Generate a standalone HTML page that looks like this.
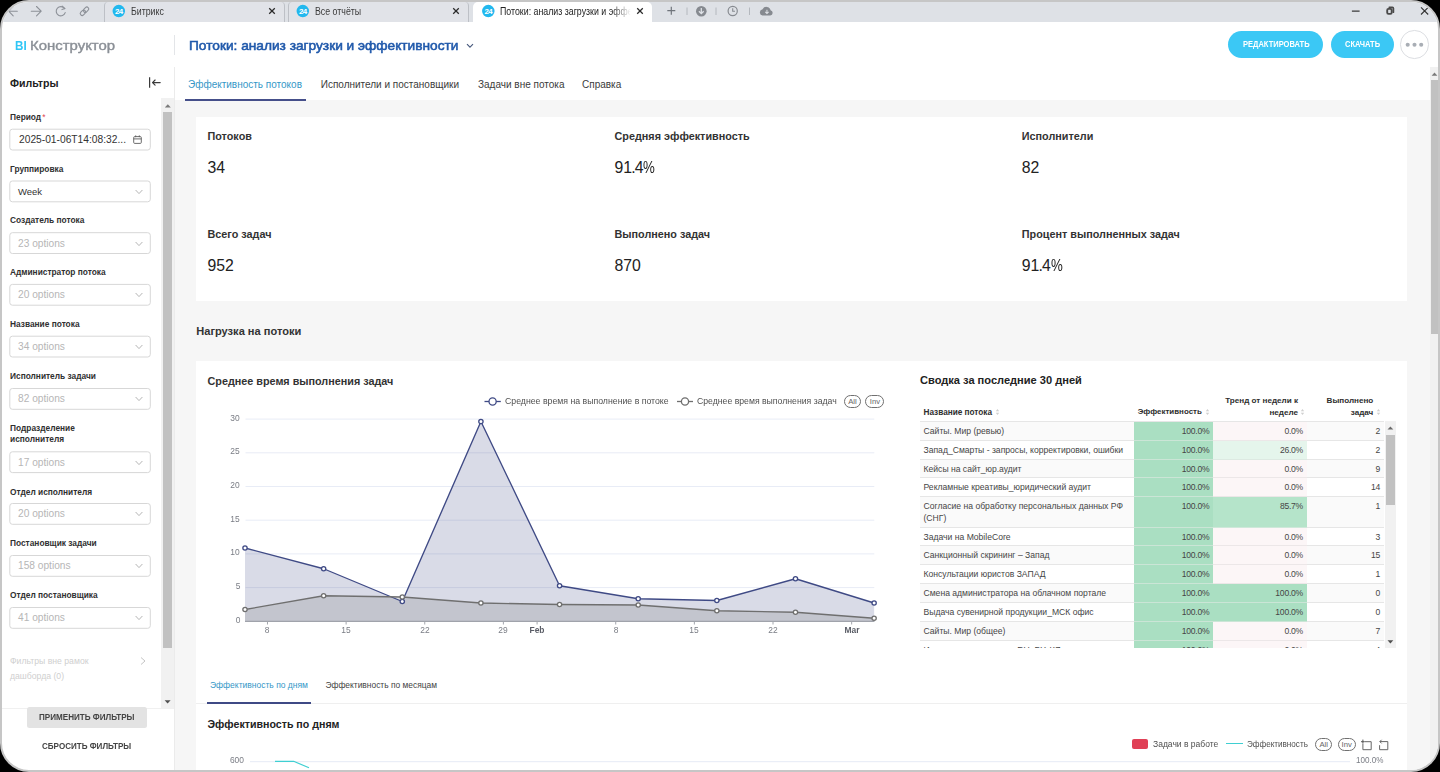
<!DOCTYPE html>
<html><head><meta charset="utf-8"><title>BI</title>
<style>
html,body{margin:0;padding:0;background:#000;}
body{width:1440px;height:772px;overflow:hidden;position:relative;font-family:"Liberation Sans", sans-serif;}
#win{position:absolute;left:0;top:0;width:1440px;height:772px;box-sizing:border-box;border:2px solid #c6c6c6;border-radius:29px;overflow:hidden;background:#fff;}
#in{position:absolute;left:-2px;top:-2px;width:1440px;height:772px;}
.t{position:absolute;white-space:nowrap;font-family:"Liberation Sans", sans-serif;}
.b{position:absolute;box-sizing:border-box;}
</style></head><body>
<div id="win"><div id="in">
<div class="b" style="left:0px;top:0px;width:1440px;height:22px;background:#dee1e6;"></div>
<svg class="b" style="left:4px;top:4px;" width="100" height="14" viewBox="0 0 100 14">
<g fill="none" stroke="#8d9198" stroke-width="1.1" stroke-linecap="round" stroke-linejoin="round">
<path d="M4.8 7.2 H13.3 M4.6 7.2 L9.2 2.6 M4.6 7.2 L9.2 11.8"/>
<path d="M27.3 7.2 H37 M37.2 7.2 L32.5 2.5 M37.2 7.2 L32.5 11.9"/>
<path d="M60.6 4.6 A4.6 4.6 0 1 0 61.2 8.6"/>
<path d="M58.2 2.2 L61 4.6 L58 5.6" />
<g transform="translate(80.5 7.2) rotate(-45)"><rect x="-5.2" y="-1.9" width="6" height="3.8" rx="1.9"/><rect x="-0.8" y="-1.9" width="6" height="3.8" rx="1.9"/></g>
</g></svg>
<div class="b" style="left:103.5px;top:2px;width:181.0px;height:20px;background:#e1e3e8;border-left:1.3px solid #bdc0c6;border-right:1.3px solid #bdc0c6;border-radius:4px 4px 0 0;"></div>
<svg class="b" style="left:111px;top:3px;" width="16" height="16" viewBox="0 0 16 16"><circle cx="7.80" cy="8.1" r="6.25" fill="#22b8ee"/></svg>
<div class="t" style="left:110.8px;top:5px;width:16px;height:12px;line-height:13.6px;font-size:7.9px;font-weight:700;color:#fff;text-align:center;letter-spacing:-0.55px;">24</div>
<div class="t" style="left:130.7px;top:4.63px;font-size:10.3px;line-height:13px;color:#3b3b3b;font-weight:400;transform:scaleX(0.855);transform-origin:0 50%;">Битрикс</div>
<svg class="b" style="left:268.2px;top:7px;" width="8" height="8" viewBox="0 0 8 8"><path d="M1.2 1.2 L6.8 6.8 M6.8 1.2 L1.2 6.8" stroke="#2b2b2b" stroke-width="1.25" fill="none"/></svg>
<div class="b" style="left:287.5px;top:2px;width:181.0px;height:20px;background:#e1e3e8;border-left:1.3px solid #bdc0c6;border-right:1.3px solid #bdc0c6;border-radius:4px 4px 0 0;"></div>
<svg class="b" style="left:295px;top:3px;" width="16" height="16" viewBox="0 0 16 16"><circle cx="7.80" cy="8.1" r="6.25" fill="#22b8ee"/></svg>
<div class="t" style="left:294.8px;top:5px;width:16px;height:12px;line-height:13.6px;font-size:7.9px;font-weight:700;color:#fff;text-align:center;letter-spacing:-0.55px;">24</div>
<div class="t" style="left:314.7px;top:4.63px;font-size:10.3px;line-height:13px;color:#3b3b3b;font-weight:400;transform:scaleX(0.855);transform-origin:0 50%;">Все отчёты</div>
<svg class="b" style="left:452.2px;top:7px;" width="8" height="8" viewBox="0 0 8 8"><path d="M1.2 1.2 L6.8 6.8 M6.8 1.2 L1.2 6.8" stroke="#2b2b2b" stroke-width="1.25" fill="none"/></svg>
<div class="b" style="left:473px;top:2px;width:179px;height:21px;background:#fff;border-radius:5px 5px 0 0;"></div>
<svg class="b" style="left:480px;top:3px;" width="16" height="16" viewBox="0 0 16 16"><circle cx="8.30" cy="8.1" r="6.25" fill="#22b8ee"/></svg>
<div class="t" style="left:480.3px;top:5px;width:16px;height:12px;line-height:13.6px;font-size:7.9px;font-weight:700;color:#fff;text-align:center;letter-spacing:-0.55px;">24</div>
<div class="t" style="left:499.5px;top:4.63px;font-size:10.3px;line-height:13px;color:#222;font-weight:400;width:153px;overflow:hidden;-webkit-mask-image:linear-gradient(90deg,#000 86%,transparent 100%);mask-image:linear-gradient(90deg,#000 86%,transparent 100%);transform:scaleX(0.855);transform-origin:0 50%;">Потоки: анализ загрузки и эффективности</div>
<svg class="b" style="left:635.7px;top:7px;" width="8" height="8" viewBox="0 0 8 8"><path d="M1.2 1.2 L6.8 6.8 M6.8 1.2 L1.2 6.8" stroke="#2b2b2b" stroke-width="1.25" fill="none"/></svg>
<svg class="b" style="left:665px;top:5px;" width="60" height="13" viewBox="0 0 60 13">
<path d="M6.3 1.7 V9.7 M2.3 5.7 H10.3" stroke="#70757c" stroke-width="1.2" fill="none"/>
<path d="M22 2.5 V10" stroke="#b4b8be" stroke-width="1"/>
<circle cx="36.3" cy="6.2" r="5.3" fill="#868a90"/>
<path d="M36.3 3 V8.3 M33.9 6.3 L36.3 8.7 L38.7 6.3" stroke="#dee1e6" stroke-width="1.3" fill="none"/>
<path d="M51 2.5 V10" stroke="#b4b8be" stroke-width="1"/></svg>
<svg class="b" style="left:725px;top:4px;" width="50" height="14" viewBox="0 0 50 14">
<circle cx="7.7" cy="7" r="4.6" fill="none" stroke="#868a90" stroke-width="1.2"/>
<path d="M7.7 4.3 V7.2 H10" stroke="#868a90" stroke-width="1.1" fill="none"/>
<path d="M24.5 3.5 V11" stroke="#b4b8be" stroke-width="1"/>
<g transform="translate(1.4 -0.3) scale(1.04)"><path d="M34.5 11.3 a3 3 0 0 1 .3 -5.9 a4.1 4.1 0 0 1 7.7 .8 a2.6 2.6 0 0 1 -.3 5.1 z" fill="#868a90"/>
<path d="M39 5.8 V9.3 M37.4 7.9 L39 9.5 L40.6 7.9" stroke="#dee1e6" stroke-width="1" fill="none"/></g></svg>
<svg class="b" style="left:1345px;top:2px;" width="90" height="18" viewBox="0 0 90 18">
<path d="M6.9 9.1 H14.6" stroke="#3a3a3a" stroke-width="1.4"/>
<rect x="42.2" y="6.9" width="4.5" height="5" rx="1.3" fill="none" stroke="#4a4a4a" stroke-width="1.9"/>
<path d="M44.3 5.3 H47.4 a1 1 0 0 1 1 1 V10.2" fill="none" stroke="#4a4a4a" stroke-width="1.7" stroke-linecap="round"/>
<path d="M76 5.3 L83.2 12.5 M83.2 5.3 L76 12.5" stroke="#333" stroke-width="1.1"/></svg>
<div class="b" style="left:175px;top:100px;width:1263px;height:672px;background:#f6f6f6;"></div>
<div class="t" style="left:14.6px;top:36.76px;font-size:13.4px;line-height:17px;color:#2fc6f6;font-weight:700;transform:scaleX(0.87);transform-origin:0 50%;">BI</div>
<div class="t" style="left:30.4px;top:36.76px;font-size:13.4px;line-height:17px;color:#8b9097;font-weight:400;transform:scaleX(1.115);transform-origin:0 50%;-webkit-text-stroke:0.4px #8b9097;">Конструктор</div>
<div class="b" style="left:174px;top:35px;width:1px;height:20px;background:#e3e5e8;"></div>
<div class="t" style="left:188.9px;top:36.79px;font-size:13.3px;line-height:17px;color:#2059ab;font-weight:400;transform:scaleX(1.03);transform-origin:0 50%;-webkit-text-stroke:0.55px #2059ab;">Потоки: анализ загрузки и эффективности</div>
<svg class="b" style="left:465px;top:42px;" width="10" height="8" viewBox="0 0 10 8"><path d="M2 2.2 L5 5.1 L8 2.2" fill="none" stroke="#46587c" stroke-width="1.15"/></svg>
<div class="b" style="left:1227.5px;top:31px;width:95px;height:27px;background:#3bc8f5;border-radius:13.5px;"></div>
<div class="t" style="left:1242.6px;top:38.47px;font-size:9.6px;line-height:12px;color:#fff;font-weight:700;transform:scaleX(0.785);transform-origin:0 50%;">РЕДАКТИРОВАТЬ</div>
<div class="b" style="left:1331px;top:31px;width:63px;height:27px;background:#3bc8f5;border-radius:13.5px;"></div>
<div class="t" style="left:1345.2px;top:38.47px;font-size:9.6px;line-height:12px;color:#fff;font-weight:700;transform:scaleX(0.78);transform-origin:0 50%;">СКАЧАТЬ</div>
<div class="b" style="left:1400.3px;top:30.3px;width:28.4px;height:28.4px;background:#fff;border:1.3px solid #dcdee2;border-radius:14.2px;"></div>
<svg class="b" style="left:1404px;top:41px;" width="22" height="8" viewBox="0 0 22 8"><circle cx="3.7" cy="3.7" r="2.05" fill="#a9aeb5"/><circle cx="10.5" cy="3.7" r="2.05" fill="#a9aeb5"/><circle cx="17.2" cy="3.7" r="2.05" fill="#a9aeb5"/></svg>
<div class="t" style="left:188px;top:78.13px;font-size:10px;line-height:13px;color:#3597c7;font-weight:400;">Эффективность потоков</div>
<div class="t" style="left:320.7px;top:78.13px;font-size:10px;line-height:13px;color:#3b3b3b;font-weight:400;">Исполнители и постановщики</div>
<div class="t" style="left:478px;top:78.13px;font-size:10px;line-height:13px;color:#3b3b3b;font-weight:400;">Задачи вне потока</div>
<div class="t" style="left:582px;top:78.13px;font-size:10px;line-height:13px;color:#3b3b3b;font-weight:400;">Справка</div>
<div class="b" style="left:185px;top:99px;width:120.5px;height:1.8px;background:#454f8a;"></div>
<div class="b" style="left:1429.5px;top:67px;width:9px;height:705px;background:#f1f1f1;"></div>
<svg class="b" style="left:1429.5px;top:70px;" width="9" height="8" viewBox="0 0 9 8"><path d="M1.6 5.8 L4.5 2.6 L7.4 5.8 Z" fill="#7a7a7a"/></svg>
<div class="b" style="left:1430.6px;top:80.2px;width:8px;height:253.5px;background:#c1c1c1;"></div>
<div class="b" style="left:174px;top:67px;width:1px;height:705px;background:#ebebeb;"></div>
<div class="t" style="left:10px;top:76.13px;font-size:10.58px;line-height:14px;color:#222;font-weight:700;">Фильтры</div>
<svg class="b" style="left:148px;top:76px;" width="14" height="13" viewBox="0 0 14 13"><path d="M1.6 1.3 V11.8" stroke="#3a3a3a" stroke-width="1.2"/><path d="M12.2 6.6 H4.5 M4.5 6.6 L7.1 4 M4.5 6.6 L7.1 9.2" stroke="#3a3a3a" stroke-width="1.15" fill="none" stroke-linecap="round" stroke-linejoin="round"/></svg>
<div class="b" style="left:161px;top:98px;width:13px;height:610px;background:#f1f1f1;"></div>
<svg class="b" style="left:162px;top:102px;" width="12" height="8" viewBox="0 0 12 8"><path d="M2.8 5.6 L5.8 2.3 L8.8 5.6 Z" fill="#7a7a7a"/></svg>
<div class="b" style="left:163px;top:112px;width:9.3px;height:536px;background:#c1c1c1;"></div>
<svg class="b" style="left:162px;top:698.3px;" width="12" height="8" viewBox="0 0 12 8"><path d="M2.6 2.2 L5.6 5.6 L8.6 2.2 Z" fill="#505050"/></svg>
<svg class="b" style="left:0;top:0" width="176" height="772" viewBox="0 0 176 772"><rect x="9.8" y="129.20" width="140.5" height="20.8" rx="2.6" fill="#fff" stroke="#d7d7d7" stroke-width="1"/><rect x="9.8" y="181.00" width="140.5" height="20.8" rx="2.6" fill="#fff" stroke="#d7d7d7" stroke-width="1"/><rect x="9.8" y="232.70" width="140.5" height="20.8" rx="2.6" fill="#fff" stroke="#d7d7d7" stroke-width="1"/><rect x="9.8" y="284.40" width="140.5" height="20.8" rx="2.6" fill="#fff" stroke="#d7d7d7" stroke-width="1"/><rect x="9.8" y="336.20" width="140.5" height="20.8" rx="2.6" fill="#fff" stroke="#d7d7d7" stroke-width="1"/><rect x="9.8" y="388.50" width="140.5" height="20.8" rx="2.6" fill="#fff" stroke="#d7d7d7" stroke-width="1"/><rect x="9.8" y="451.80" width="140.5" height="20.8" rx="2.6" fill="#fff" stroke="#d7d7d7" stroke-width="1"/><rect x="9.8" y="503.50" width="140.5" height="20.8" rx="2.6" fill="#fff" stroke="#d7d7d7" stroke-width="1"/><rect x="9.8" y="555.50" width="140.5" height="20.8" rx="2.6" fill="#fff" stroke="#d7d7d7" stroke-width="1"/><rect x="9.8" y="607.50" width="140.5" height="20.8" rx="2.6" fill="#fff" stroke="#d7d7d7" stroke-width="1"/></svg>
<div class="t" style="left:10px;top:111.61px;font-size:8.35px;line-height:11px;color:#303030;font-weight:700;">Период<span style="color:#e0444d;font-weight:400;margin-left:1px">*</span></div>
<div class="t" style="left:19px;top:133.25px;font-size:10.24px;line-height:13px;color:#333;font-weight:400;">2025-01-06T14:08:32...</div>
<svg class="b" style="left:131.5px;top:134.4px;" width="11" height="11" viewBox="0 0 11 11"><rect x="1.7" y="2.6" width="7.6" height="6.8" rx="1" fill="none" stroke="#5c5c5c" stroke-width="0.9"/><path d="M1.7 4.9 H9.3 M3.7 1.4 V3.2 M7.3 1.4 V3.2" stroke="#5c5c5c" stroke-width="0.9" fill="none"/></svg>
<div class="t" style="left:10px;top:164.11px;font-size:8.35px;line-height:11px;color:#303030;font-weight:700;">Группировка</div>
<div class="t" style="left:18px;top:185.71px;font-size:9.5px;line-height:12px;color:#333;font-weight:400;">Week</div>
<svg class="b" style="left:134px;top:187.9px;" width="10" height="8" viewBox="0 0 10 8"><path d="M1.6 2 L5 5.6 L8.4 2" fill="none" stroke="#b5b5b5" stroke-width="1"/></svg>
<div class="t" style="left:10px;top:215.01px;font-size:8.35px;line-height:11px;color:#303030;font-weight:700;">Создатель потока</div>
<div class="t" style="left:18px;top:236.67px;font-size:10.18px;line-height:13px;color:#b6b6b6;font-weight:400;">23 options</div>
<svg class="b" style="left:134px;top:239.6px;" width="10" height="8" viewBox="0 0 10 8"><path d="M1.6 2 L5 5.6 L8.4 2" fill="none" stroke="#b5b5b5" stroke-width="1"/></svg>
<div class="t" style="left:10px;top:267.21px;font-size:8.35px;line-height:11px;color:#303030;font-weight:700;">Администратор потока</div>
<div class="t" style="left:18px;top:288.37px;font-size:10.18px;line-height:13px;color:#b6b6b6;font-weight:400;">20 options</div>
<svg class="b" style="left:134px;top:291.29999999999995px;" width="10" height="8" viewBox="0 0 10 8"><path d="M1.6 2 L5 5.6 L8.4 2" fill="none" stroke="#b5b5b5" stroke-width="1"/></svg>
<div class="t" style="left:10px;top:318.51px;font-size:8.35px;line-height:11px;color:#303030;font-weight:700;">Название потока</div>
<div class="t" style="left:18px;top:340.17px;font-size:10.18px;line-height:13px;color:#b6b6b6;font-weight:400;">34 options</div>
<svg class="b" style="left:134px;top:343.09999999999997px;" width="10" height="8" viewBox="0 0 10 8"><path d="M1.6 2 L5 5.6 L8.4 2" fill="none" stroke="#b5b5b5" stroke-width="1"/></svg>
<div class="t" style="left:10px;top:371.41px;font-size:8.35px;line-height:11px;color:#303030;font-weight:700;">Исполнитель задачи</div>
<div class="t" style="left:18px;top:392.47px;font-size:10.18px;line-height:13px;color:#b6b6b6;font-weight:400;">82 options</div>
<svg class="b" style="left:134px;top:395.4px;" width="10" height="8" viewBox="0 0 10 8"><path d="M1.6 2 L5 5.6 L8.4 2" fill="none" stroke="#b5b5b5" stroke-width="1"/></svg>
<div class="t" style="left:10px;top:423.31px;font-size:8.35px;line-height:11px;color:#303030;font-weight:700;">Подразделение</div>
<div class="t" style="left:10px;top:434.11px;font-size:8.35px;line-height:11px;color:#303030;font-weight:700;">исполнителя</div>
<div class="t" style="left:18px;top:455.77px;font-size:10.18px;line-height:13px;color:#b6b6b6;font-weight:400;">17 options</div>
<svg class="b" style="left:134px;top:458.7px;" width="10" height="8" viewBox="0 0 10 8"><path d="M1.6 2 L5 5.6 L8.4 2" fill="none" stroke="#b5b5b5" stroke-width="1"/></svg>
<div class="t" style="left:10px;top:486.61px;font-size:8.35px;line-height:11px;color:#303030;font-weight:700;">Отдел исполнителя</div>
<div class="t" style="left:18px;top:507.47px;font-size:10.18px;line-height:13px;color:#b6b6b6;font-weight:400;">20 options</div>
<svg class="b" style="left:134px;top:510.4px;" width="10" height="8" viewBox="0 0 10 8"><path d="M1.6 2 L5 5.6 L8.4 2" fill="none" stroke="#b5b5b5" stroke-width="1"/></svg>
<div class="t" style="left:10px;top:538.41px;font-size:8.35px;line-height:11px;color:#303030;font-weight:700;">Постановщик задачи</div>
<div class="t" style="left:18px;top:559.47px;font-size:10.18px;line-height:13px;color:#b6b6b6;font-weight:400;">158 options</div>
<svg class="b" style="left:134px;top:562.4px;" width="10" height="8" viewBox="0 0 10 8"><path d="M1.6 2 L5 5.6 L8.4 2" fill="none" stroke="#b5b5b5" stroke-width="1"/></svg>
<div class="t" style="left:10px;top:590.11px;font-size:8.35px;line-height:11px;color:#303030;font-weight:700;">Отдел постановщика</div>
<div class="t" style="left:18px;top:611.47px;font-size:10.18px;line-height:13px;color:#b6b6b6;font-weight:400;">41 options</div>
<svg class="b" style="left:134px;top:614.4px;" width="10" height="8" viewBox="0 0 10 8"><path d="M1.6 2 L5 5.6 L8.4 2" fill="none" stroke="#b5b5b5" stroke-width="1"/></svg>
<div class="t" style="left:10px;top:655.5px;font-size:8.67px;line-height:11px;color:#cfcfcf;font-weight:400;">Фильтры вне рамок</div>
<div class="t" style="left:10px;top:670.5px;font-size:8.67px;line-height:11px;color:#cfcfcf;font-weight:400;">дашборда (0)</div>
<svg class="b" style="left:139px;top:656px;" width="8" height="10" viewBox="0 0 8 10"><path d="M2 1.5 L6 5 L2 8.5" fill="none" stroke="#c4c4c4" stroke-width="1"/></svg>
<div class="b" style="left:2px;top:707.5px;width:172px;height:1px;background:#f0f0f0;"></div>
<div class="b" style="left:27px;top:707px;width:120px;height:21px;background:#e3e3e3;border-radius:2.5px;"></div>
<div class="t" style="left:38.5px;top:712.09px;font-size:8.7px;line-height:11px;color:#444;font-weight:700;transform:scaleX(0.932);transform-origin:0 50%;">ПРИМЕНИТЬ ФИЛЬТРЫ</div>
<div class="t" style="left:41.8px;top:740.79px;font-size:8.7px;line-height:11px;color:#444;font-weight:700;transform:scaleX(0.928);transform-origin:0 50%;">СБРОСИТЬ ФИЛЬТРЫ</div>
<div class="b" style="left:196.3px;top:117.3px;width:1211px;height:183.5px;background:#fff;"></div>
<div class="t" style="left:207.5px;top:129.25px;font-size:10.82px;line-height:14px;color:#333;font-weight:700;">Потоков</div>
<div class="t" style="left:207.5px;top:157.43px;font-size:15.8px;line-height:21px;color:#222;font-weight:400;">34</div>
<div class="t" style="left:614.5px;top:129.25px;font-size:10.82px;line-height:14px;color:#333;font-weight:700;">Средняя эффективность</div>
<div class="t" style="left:614.5px;top:157.43px;font-size:15.8px;line-height:21px;color:#222;font-weight:400;">91<span style="margin:0 -0.9px">.</span>4<span style="display:inline-block;transform:scaleX(0.84);transform-origin:0 50%">%</span></div>
<div class="t" style="left:1021.8px;top:129.25px;font-size:10.82px;line-height:14px;color:#333;font-weight:700;">Исполнители</div>
<div class="t" style="left:1021.8px;top:157.43px;font-size:15.8px;line-height:21px;color:#222;font-weight:400;">82</div>
<div class="t" style="left:207.5px;top:227.25px;font-size:10.82px;line-height:14px;color:#333;font-weight:700;">Всего задач</div>
<div class="t" style="left:207.5px;top:255.43px;font-size:15.8px;line-height:21px;color:#222;font-weight:400;">952</div>
<div class="t" style="left:614.5px;top:227.25px;font-size:10.82px;line-height:14px;color:#333;font-weight:700;">Выполнено задач</div>
<div class="t" style="left:614.5px;top:255.43px;font-size:15.8px;line-height:21px;color:#222;font-weight:400;">870</div>
<div class="t" style="left:1021.8px;top:227.25px;font-size:10.82px;line-height:14px;color:#333;font-weight:700;">Процент выполненных задач</div>
<div class="t" style="left:1021.8px;top:255.43px;font-size:15.8px;line-height:21px;color:#222;font-weight:400;">91<span style="margin:0 -0.9px">.</span>4<span style="display:inline-block;transform:scaleX(0.84);transform-origin:0 50%">%</span></div>
<div class="t" style="left:196.3px;top:323.57px;font-size:11.06px;line-height:14px;color:#333;font-weight:700;">Нагрузка на потоки</div>
<div class="b" style="left:196.3px;top:361.3px;width:1211px;height:420px;background:#fff;"></div>
<div class="t" style="left:207.5px;top:373.65px;font-size:10.81px;line-height:14px;color:#333;font-weight:700;">Среднее время выполнения задач</div>
<svg class="b" style="left:0px;top:0px;pointer-events:none;" width="1440" height="772" viewBox="0 0 1440 772"><path d="M245.5 587.60 H874.3" stroke="#e8ecf6" stroke-width="1"/><path d="M245.5 553.90 H874.3" stroke="#e8ecf6" stroke-width="1"/><path d="M245.5 520.20 H874.3" stroke="#e8ecf6" stroke-width="1"/><path d="M245.5 486.50 H874.3" stroke="#e8ecf6" stroke-width="1"/><path d="M245.5 452.80 H874.3" stroke="#e8ecf6" stroke-width="1"/><path d="M245.5 419.10 H874.3" stroke="#e8ecf6" stroke-width="1"/><polygon points="245.00,548.00 323.64,568.75 402.28,601.50 480.92,421.50 559.56,585.75 638.20,598.75 716.84,600.50 795.48,578.75 874.12,603.00 874.12,621.3 245.00,621.3" fill="#3f4a85" fill-opacity="0.2"/><polygon points="245.00,609.50 323.64,595.75 402.28,597.00 480.92,603.00 559.56,604.50 638.20,605.00 716.84,610.75 795.48,612.25 874.12,618.25 874.12,621.3 245.00,621.3" fill="#707070" fill-opacity="0.2"/><path d="M245 621.3 H874.5" stroke="#a0a3ab" stroke-width="1.2"/><path d="M267.47 621.3 V624.5" stroke="#a3a6ad" stroke-width="1"/><path d="M346.11 621.3 V624.5" stroke="#a3a6ad" stroke-width="1"/><path d="M424.75 621.3 V624.5" stroke="#a3a6ad" stroke-width="1"/><path d="M503.39 621.3 V624.5" stroke="#a3a6ad" stroke-width="1"/><path d="M537.09 621.3 V624.5" stroke="#a3a6ad" stroke-width="1"/><path d="M615.73 621.3 V624.5" stroke="#a3a6ad" stroke-width="1"/><path d="M694.37 621.3 V624.5" stroke="#a3a6ad" stroke-width="1"/><path d="M773.01 621.3 V624.5" stroke="#a3a6ad" stroke-width="1"/><path d="M851.65 621.3 V624.5" stroke="#a3a6ad" stroke-width="1"/><polyline points="245.00,548.00 323.64,568.75 402.28,601.50 480.92,421.50 559.56,585.75 638.20,598.75 716.84,600.50 795.48,578.75 874.12,603.00" fill="none" stroke="#3f4a85" stroke-width="1.35" stroke-linejoin="round"/><polyline points="245.00,609.50 323.64,595.75 402.28,597.00 480.92,603.00 559.56,604.50 638.20,605.00 716.84,610.75 795.48,612.25 874.12,618.25" fill="none" stroke="#6f6f6f" stroke-width="1.35" stroke-linejoin="round"/><circle cx="245.00" cy="548.00" r="2.15" fill="#fff" stroke="#3f4a85" stroke-width="1.3"/><circle cx="323.64" cy="568.75" r="2.15" fill="#fff" stroke="#3f4a85" stroke-width="1.3"/><circle cx="402.28" cy="601.50" r="2.15" fill="#fff" stroke="#3f4a85" stroke-width="1.3"/><circle cx="480.92" cy="421.50" r="2.15" fill="#fff" stroke="#3f4a85" stroke-width="1.3"/><circle cx="559.56" cy="585.75" r="2.15" fill="#fff" stroke="#3f4a85" stroke-width="1.3"/><circle cx="638.20" cy="598.75" r="2.15" fill="#fff" stroke="#3f4a85" stroke-width="1.3"/><circle cx="716.84" cy="600.50" r="2.15" fill="#fff" stroke="#3f4a85" stroke-width="1.3"/><circle cx="795.48" cy="578.75" r="2.15" fill="#fff" stroke="#3f4a85" stroke-width="1.3"/><circle cx="874.12" cy="603.00" r="2.15" fill="#fff" stroke="#3f4a85" stroke-width="1.3"/><circle cx="245.00" cy="609.50" r="2.15" fill="#fff" stroke="#6f6f6f" stroke-width="1.3"/><circle cx="323.64" cy="595.75" r="2.15" fill="#fff" stroke="#6f6f6f" stroke-width="1.3"/><circle cx="402.28" cy="597.00" r="2.15" fill="#fff" stroke="#6f6f6f" stroke-width="1.3"/><circle cx="480.92" cy="603.00" r="2.15" fill="#fff" stroke="#6f6f6f" stroke-width="1.3"/><circle cx="559.56" cy="604.50" r="2.15" fill="#fff" stroke="#6f6f6f" stroke-width="1.3"/><circle cx="638.20" cy="605.00" r="2.15" fill="#fff" stroke="#6f6f6f" stroke-width="1.3"/><circle cx="716.84" cy="610.75" r="2.15" fill="#fff" stroke="#6f6f6f" stroke-width="1.3"/><circle cx="795.48" cy="612.25" r="2.15" fill="#fff" stroke="#6f6f6f" stroke-width="1.3"/><circle cx="874.12" cy="618.25" r="2.15" fill="#fff" stroke="#6f6f6f" stroke-width="1.3"/><path d="M484.5 401.5 H500.8" stroke="#3f4a85" stroke-width="1.3"/><circle cx="492.6" cy="401.5" r="3.6" fill="#fff" stroke="#3f4a85" stroke-width="1.3"/><path d="M677 401.5 H693" stroke="#6f6f6f" stroke-width="1.3"/><circle cx="685" cy="401.5" r="3.6" fill="#fff" stroke="#6f6f6f" stroke-width="1.3"/></svg>
<div class="t" style="right:1200px;top:613.87px;font-size:9.6px;line-height:12px;color:#7a7d85;font-weight:400;transform:scaleX(0.88);transform-origin:100% 50%;">0</div>
<div class="t" style="right:1200px;top:580.17px;font-size:9.6px;line-height:12px;color:#7a7d85;font-weight:400;transform:scaleX(0.88);transform-origin:100% 50%;">5</div>
<div class="t" style="right:1200px;top:546.47px;font-size:9.6px;line-height:12px;color:#7a7d85;font-weight:400;transform:scaleX(0.88);transform-origin:100% 50%;">10</div>
<div class="t" style="right:1200px;top:512.77px;font-size:9.6px;line-height:12px;color:#7a7d85;font-weight:400;transform:scaleX(0.88);transform-origin:100% 50%;">15</div>
<div class="t" style="right:1200px;top:479.07px;font-size:9.6px;line-height:12px;color:#7a7d85;font-weight:400;transform:scaleX(0.88);transform-origin:100% 50%;">20</div>
<div class="t" style="right:1200px;top:445.37px;font-size:9.6px;line-height:12px;color:#7a7d85;font-weight:400;transform:scaleX(0.88);transform-origin:100% 50%;">25</div>
<div class="t" style="right:1200px;top:411.67px;font-size:9.6px;line-height:12px;color:#7a7d85;font-weight:400;transform:scaleX(0.88);transform-origin:100% 50%;">30</div>
<div class="t" style="left:247.47px;top:624.3px;width:40px;text-align:center;font-size:9.6px;line-height:11px;transform:scaleX(0.88);color:#7a7d85;font-weight:400;">8</div>
<div class="t" style="left:326.11px;top:624.3px;width:40px;text-align:center;font-size:9.6px;line-height:11px;transform:scaleX(0.88);color:#7a7d85;font-weight:400;">15</div>
<div class="t" style="left:404.75px;top:624.3px;width:40px;text-align:center;font-size:9.6px;line-height:11px;transform:scaleX(0.88);color:#7a7d85;font-weight:400;">22</div>
<div class="t" style="left:483.39px;top:624.3px;width:40px;text-align:center;font-size:9.6px;line-height:11px;transform:scaleX(0.88);color:#7a7d85;font-weight:400;">29</div>
<div class="t" style="left:517.09px;top:624.3px;width:40px;text-align:center;font-size:9.6px;line-height:11px;transform:scaleX(0.88);color:#5a5d66;font-weight:700;">Feb</div>
<div class="t" style="left:595.73px;top:624.3px;width:40px;text-align:center;font-size:9.6px;line-height:11px;transform:scaleX(0.88);color:#7a7d85;font-weight:400;">8</div>
<div class="t" style="left:674.37px;top:624.3px;width:40px;text-align:center;font-size:9.6px;line-height:11px;transform:scaleX(0.88);color:#7a7d85;font-weight:400;">15</div>
<div class="t" style="left:753.01px;top:624.3px;width:40px;text-align:center;font-size:9.6px;line-height:11px;transform:scaleX(0.88);color:#7a7d85;font-weight:400;">22</div>
<div class="t" style="left:831.65px;top:624.3px;width:40px;text-align:center;font-size:9.6px;line-height:11px;transform:scaleX(0.88);color:#5a5d66;font-weight:700;">Mar</div>
<div class="t" style="left:505px;top:394.84px;font-size:9.4px;line-height:12px;color:#505050;font-weight:400;transform:scaleX(0.932);transform-origin:0 50%;">Среднее время на выполнение в потоке</div>
<div class="t" style="left:697px;top:394.84px;font-size:9.4px;line-height:12px;color:#505050;font-weight:400;transform:scaleX(0.926);transform-origin:0 50%;">Среднее время выполнения задач</div>
<div class="t" style="left:843.9px;top:394.9px;width:17.100000000000023px;height:13.0px;box-sizing:border-box;border:1px solid #707070;border-radius:6.5px;font-size:7.7px;line-height:12.8px;text-align:center;color:#666;">All</div>
<div class="t" style="left:865.4px;top:394.9px;width:19.100000000000023px;height:13.0px;box-sizing:border-box;border:1px solid #707070;border-radius:6.5px;font-size:7.7px;line-height:12.8px;text-align:center;color:#666;">Inv</div>
<div class="t" style="left:920px;top:373.46px;font-size:11.07px;line-height:14px;color:#222;font-weight:700;">Сводка за последние 30 дней</div>
<div class="t" style="left:923.5px;top:406.65px;font-size:8.22px;line-height:11px;color:#2e2e2e;font-weight:700;">Название потока</div>
<svg class="b" style="left:995px;top:408.2px;" width="5" height="8" viewBox="0 0 5 8"><path d="M0.8 3.2 L2.5 1 L4.2 3.2 Z M0.8 4.8 L2.5 7 L4.2 4.8 Z" fill="#d0d0d0"/></svg>
<div class="t" style="right:238.20000000000005px;top:407.25px;font-size:7.95px;line-height:10px;color:#2e2e2e;font-weight:700;">Эффективность</div>
<svg class="b" style="left:1204.8px;top:408.2px;" width="5" height="8" viewBox="0 0 5 8"><path d="M0.8 3.2 L2.5 1 L4.2 3.2 Z M0.8 4.8 L2.5 7 L4.2 4.8 Z" fill="#d0d0d0"/></svg>
<div class="t" style="right:142px;top:395.49px;font-size:8.1px;line-height:11px;color:#2e2e2e;font-weight:700;">Тренд от недели к</div>
<div class="t" style="right:142px;top:406.69px;font-size:8.1px;line-height:11px;color:#2e2e2e;font-weight:700;">неделе</div>
<svg class="b" style="left:1300px;top:408.2px;" width="5" height="8" viewBox="0 0 5 8"><path d="M0.8 3.2 L2.5 1 L4.2 3.2 Z M0.8 4.8 L2.5 7 L4.2 4.8 Z" fill="#d0d0d0"/></svg>
<div class="t" style="right:66.70000000000005px;top:395.49px;font-size:8.1px;line-height:11px;color:#2e2e2e;font-weight:700;">Выполнено</div>
<div class="t" style="right:66.70000000000005px;top:406.69px;font-size:8.1px;line-height:11px;color:#2e2e2e;font-weight:700;">задач</div>
<svg class="b" style="left:1375.6px;top:408.2px;" width="5" height="8" viewBox="0 0 5 8"><path d="M0.8 3.2 L2.5 1 L4.2 3.2 Z M0.8 4.8 L2.5 7 L4.2 4.8 Z" fill="#d0d0d0"/></svg>
<div class="b" style="left:920.0px;top:420.7px;width:464.0px;height:1px;background:#e6e6e6;"></div>
<div class="b" style="left:920.0px;top:421.7px;width:476.0px;height:225.9px;overflow:hidden;">
<div class="b" style="left:0;top:0.00px;width:464.0px;height:18.93px;background:#fafafa;border-bottom:1px solid #e6e6e6;"></div>
<div class="b" style="left:292.0px;top:0.00px;width:95.0px;height:18.93px;background:#fcf6f7;border-bottom:1px solid #ece7e8;"></div>
<div class="b" style="left:214.0px;top:0.00px;width:79.0px;height:18.93px;background:#aadfc2;border-bottom:1px solid #cbe5d6;"></div>
<div class="t" style="left:3.5px;top:4.02px;font-size:8.6px;line-height:11px;color:#464646;">Сайты. Мир (ревью)</div>
<div class="t" style="right:186.7px;top:4.02px;font-size:8.6px;line-height:11px;color:#464646;letter-spacing:-0.25px;">100.0%</div>
<div class="t" style="right:93.0px;top:4.02px;font-size:8.6px;line-height:11px;color:#464646;letter-spacing:-0.25px;">0.0%</div>
<div class="t" style="right:16.0px;top:4.02px;font-size:8.6px;line-height:11px;color:#464646;letter-spacing:-0.25px;">2</div>
<div class="b" style="left:0;top:18.93px;width:464.0px;height:18.93px;background:#fff;border-bottom:1px solid #e6e6e6;"></div>
<div class="b" style="left:292.0px;top:18.93px;width:95.0px;height:18.93px;background:#e5f5ec;border-bottom:1px solid #dde9e2;"></div>
<div class="b" style="left:214.0px;top:18.93px;width:79.0px;height:18.93px;background:#aadfc2;border-bottom:1px solid #cbe5d6;"></div>
<div class="t" style="left:3.5px;top:22.95px;font-size:8.6px;line-height:11px;color:#464646;">Запад_Смарты - запросы, корректировки, ошибки</div>
<div class="t" style="right:186.7px;top:22.95px;font-size:8.6px;line-height:11px;color:#464646;letter-spacing:-0.25px;">100.0%</div>
<div class="t" style="right:93.0px;top:22.95px;font-size:8.6px;line-height:11px;color:#464646;letter-spacing:-0.25px;">26.0%</div>
<div class="t" style="right:16.0px;top:22.95px;font-size:8.6px;line-height:11px;color:#464646;letter-spacing:-0.25px;">2</div>
<div class="b" style="left:0;top:37.86px;width:464.0px;height:18.93px;background:#fafafa;border-bottom:1px solid #e6e6e6;"></div>
<div class="b" style="left:292.0px;top:37.86px;width:95.0px;height:18.93px;background:#fcf6f7;border-bottom:1px solid #ece7e8;"></div>
<div class="b" style="left:214.0px;top:37.86px;width:79.0px;height:18.93px;background:#aadfc2;border-bottom:1px solid #cbe5d6;"></div>
<div class="t" style="left:3.5px;top:41.88px;font-size:8.6px;line-height:11px;color:#464646;">Кейсы на сайт_юр.аудит</div>
<div class="t" style="right:186.7px;top:41.88px;font-size:8.6px;line-height:11px;color:#464646;letter-spacing:-0.25px;">100.0%</div>
<div class="t" style="right:93.0px;top:41.88px;font-size:8.6px;line-height:11px;color:#464646;letter-spacing:-0.25px;">0.0%</div>
<div class="t" style="right:16.0px;top:41.88px;font-size:8.6px;line-height:11px;color:#464646;letter-spacing:-0.25px;">9</div>
<div class="b" style="left:0;top:56.79px;width:464.0px;height:18.93px;background:#fff;border-bottom:1px solid #e6e6e6;"></div>
<div class="b" style="left:292.0px;top:56.79px;width:95.0px;height:18.93px;background:#fcf6f7;border-bottom:1px solid #ece7e8;"></div>
<div class="b" style="left:214.0px;top:56.79px;width:79.0px;height:18.93px;background:#aadfc2;border-bottom:1px solid #cbe5d6;"></div>
<div class="t" style="left:3.5px;top:60.81px;font-size:8.6px;line-height:11px;color:#464646;">Рекламные креативы_юридический аудит</div>
<div class="t" style="right:186.7px;top:60.81px;font-size:8.6px;line-height:11px;color:#464646;letter-spacing:-0.25px;">100.0%</div>
<div class="t" style="right:93.0px;top:60.81px;font-size:8.6px;line-height:11px;color:#464646;letter-spacing:-0.25px;">0.0%</div>
<div class="t" style="right:16.0px;top:60.81px;font-size:8.6px;line-height:11px;color:#464646;letter-spacing:-0.25px;">14</div>
<div class="b" style="left:0;top:75.72px;width:464.0px;height:30.10px;background:#fafafa;border-bottom:1px solid #e6e6e6;"></div>
<div class="b" style="left:292.0px;top:75.72px;width:95.0px;height:30.10px;background:#b5e4ca;border-bottom:1px solid #cfe8da;"></div>
<div class="b" style="left:214.0px;top:75.72px;width:79.0px;height:30.10px;background:#aadfc2;border-bottom:1px solid #cbe5d6;"></div>
<div class="t" style="left:3.5px;top:79.74px;font-size:8.6px;line-height:11px;color:#464646;">Согласие на обработку персональных данных РФ</div>
<div class="t" style="left:3.5px;top:91.04px;font-size:8.6px;line-height:11px;color:#464646;">(СНГ)</div>
<div class="t" style="right:186.7px;top:79.74px;font-size:8.6px;line-height:11px;color:#464646;letter-spacing:-0.25px;">100.0%</div>
<div class="t" style="right:93.0px;top:79.74px;font-size:8.6px;line-height:11px;color:#464646;letter-spacing:-0.25px;">85.7%</div>
<div class="t" style="right:16.0px;top:79.74px;font-size:8.6px;line-height:11px;color:#464646;letter-spacing:-0.25px;">1</div>
<div class="b" style="left:0;top:105.82px;width:464.0px;height:18.93px;background:#fff;border-bottom:1px solid #e6e6e6;"></div>
<div class="b" style="left:292.0px;top:105.82px;width:95.0px;height:18.93px;background:#fcf6f7;border-bottom:1px solid #ece7e8;"></div>
<div class="b" style="left:214.0px;top:105.82px;width:79.0px;height:18.93px;background:#aadfc2;border-bottom:1px solid #cbe5d6;"></div>
<div class="t" style="left:3.5px;top:109.84px;font-size:8.6px;line-height:11px;color:#464646;">Задачи на MobileCore</div>
<div class="t" style="right:186.7px;top:109.84px;font-size:8.6px;line-height:11px;color:#464646;letter-spacing:-0.25px;">100.0%</div>
<div class="t" style="right:93.0px;top:109.84px;font-size:8.6px;line-height:11px;color:#464646;letter-spacing:-0.25px;">0.0%</div>
<div class="t" style="right:16.0px;top:109.84px;font-size:8.6px;line-height:11px;color:#464646;letter-spacing:-0.25px;">3</div>
<div class="b" style="left:0;top:124.75px;width:464.0px;height:18.93px;background:#fafafa;border-bottom:1px solid #e6e6e6;"></div>
<div class="b" style="left:292.0px;top:124.75px;width:95.0px;height:18.93px;background:#fcf6f7;border-bottom:1px solid #ece7e8;"></div>
<div class="b" style="left:214.0px;top:124.75px;width:79.0px;height:18.93px;background:#aadfc2;border-bottom:1px solid #cbe5d6;"></div>
<div class="t" style="left:3.5px;top:128.77px;font-size:8.6px;line-height:11px;color:#464646;">Санкционный скрининг – Запад</div>
<div class="t" style="right:186.7px;top:128.77px;font-size:8.6px;line-height:11px;color:#464646;letter-spacing:-0.25px;">100.0%</div>
<div class="t" style="right:93.0px;top:128.77px;font-size:8.6px;line-height:11px;color:#464646;letter-spacing:-0.25px;">0.0%</div>
<div class="t" style="right:16.0px;top:128.77px;font-size:8.6px;line-height:11px;color:#464646;letter-spacing:-0.25px;">15</div>
<div class="b" style="left:0;top:143.68px;width:464.0px;height:18.93px;background:#fff;border-bottom:1px solid #e6e6e6;"></div>
<div class="b" style="left:292.0px;top:143.68px;width:95.0px;height:18.93px;background:#fcf6f7;border-bottom:1px solid #ece7e8;"></div>
<div class="b" style="left:214.0px;top:143.68px;width:79.0px;height:18.93px;background:#aadfc2;border-bottom:1px solid #cbe5d6;"></div>
<div class="t" style="left:3.5px;top:147.70px;font-size:8.6px;line-height:11px;color:#464646;">Консультации юристов ЗАПАД</div>
<div class="t" style="right:186.7px;top:147.70px;font-size:8.6px;line-height:11px;color:#464646;letter-spacing:-0.25px;">100.0%</div>
<div class="t" style="right:93.0px;top:147.70px;font-size:8.6px;line-height:11px;color:#464646;letter-spacing:-0.25px;">0.0%</div>
<div class="t" style="right:16.0px;top:147.70px;font-size:8.6px;line-height:11px;color:#464646;letter-spacing:-0.25px;">1</div>
<div class="b" style="left:0;top:162.61px;width:464.0px;height:18.93px;background:#fafafa;border-bottom:1px solid #e6e6e6;"></div>
<div class="b" style="left:292.0px;top:162.61px;width:95.0px;height:18.93px;background:#aadfc2;border-bottom:1px solid #cbe5d6;"></div>
<div class="b" style="left:214.0px;top:162.61px;width:79.0px;height:18.93px;background:#aadfc2;border-bottom:1px solid #cbe5d6;"></div>
<div class="t" style="left:3.5px;top:166.63px;font-size:8.6px;line-height:11px;color:#464646;">Смена администратора на облачном портале</div>
<div class="t" style="right:186.7px;top:166.63px;font-size:8.6px;line-height:11px;color:#464646;letter-spacing:-0.25px;">100.0%</div>
<div class="t" style="right:93.0px;top:166.63px;font-size:8.6px;line-height:11px;color:#464646;letter-spacing:-0.25px;">100.0%</div>
<div class="t" style="right:16.0px;top:166.63px;font-size:8.6px;line-height:11px;color:#464646;letter-spacing:-0.25px;">0</div>
<div class="b" style="left:0;top:181.54px;width:464.0px;height:18.93px;background:#fff;border-bottom:1px solid #e6e6e6;"></div>
<div class="b" style="left:292.0px;top:181.54px;width:95.0px;height:18.93px;background:#aadfc2;border-bottom:1px solid #cbe5d6;"></div>
<div class="b" style="left:214.0px;top:181.54px;width:79.0px;height:18.93px;background:#aadfc2;border-bottom:1px solid #cbe5d6;"></div>
<div class="t" style="left:3.5px;top:185.56px;font-size:8.6px;line-height:11px;color:#464646;">Выдача сувенирной продукции_МСК офис</div>
<div class="t" style="right:186.7px;top:185.56px;font-size:8.6px;line-height:11px;color:#464646;letter-spacing:-0.25px;">100.0%</div>
<div class="t" style="right:93.0px;top:185.56px;font-size:8.6px;line-height:11px;color:#464646;letter-spacing:-0.25px;">100.0%</div>
<div class="t" style="right:16.0px;top:185.56px;font-size:8.6px;line-height:11px;color:#464646;letter-spacing:-0.25px;">0</div>
<div class="b" style="left:0;top:200.47px;width:464.0px;height:18.93px;background:#fafafa;border-bottom:1px solid #e6e6e6;"></div>
<div class="b" style="left:292.0px;top:200.47px;width:95.0px;height:18.93px;background:#fcf6f7;border-bottom:1px solid #ece7e8;"></div>
<div class="b" style="left:214.0px;top:200.47px;width:79.0px;height:18.93px;background:#aadfc2;border-bottom:1px solid #cbe5d6;"></div>
<div class="t" style="left:3.5px;top:204.49px;font-size:8.6px;line-height:11px;color:#464646;">Сайты. Мир (общее)</div>
<div class="t" style="right:186.7px;top:204.49px;font-size:8.6px;line-height:11px;color:#464646;letter-spacing:-0.25px;">100.0%</div>
<div class="t" style="right:93.0px;top:204.49px;font-size:8.6px;line-height:11px;color:#464646;letter-spacing:-0.25px;">0.0%</div>
<div class="t" style="right:16.0px;top:204.49px;font-size:8.6px;line-height:11px;color:#464646;letter-spacing:-0.25px;">7</div>
<div class="b" style="left:0;top:219.40px;width:464.0px;height:18.93px;background:#fff;border-bottom:1px solid #e6e6e6;"></div>
<div class="b" style="left:292.0px;top:219.40px;width:95.0px;height:18.93px;background:#fcf6f7;border-bottom:1px solid #ece7e8;"></div>
<div class="b" style="left:214.0px;top:219.40px;width:79.0px;height:18.93px;background:#aadfc2;border-bottom:1px solid #cbe5d6;"></div>
<div class="t" style="left:3.5px;top:222.82px;font-size:8.6px;line-height:11px;color:#464646;">Исходящие документы RU, BY, KZ</div>
<div class="t" style="right:186.7px;top:222.82px;font-size:8.6px;line-height:11px;color:#464646;letter-spacing:-0.25px;">100.0%</div>
<div class="t" style="right:93.0px;top:222.82px;font-size:8.6px;line-height:11px;color:#464646;letter-spacing:-0.25px;">0.0%</div>
<div class="t" style="right:16.0px;top:222.82px;font-size:8.6px;line-height:11px;color:#464646;letter-spacing:-0.25px;">4</div>
</div>
<div class="b" style="left:1384.5px;top:421.2px;width:11px;height:226.4px;background:#f1f1f1;"></div>
<svg class="b" style="left:1384.5px;top:424px;" width="11" height="8" viewBox="0 0 11 8"><path d="M2.5 5.6 L5.4 2.4 L8.3 5.6 Z" fill="#6a6a6a"/></svg>
<div class="b" style="left:1385.5px;top:434.5px;width:9px;height:70.5px;background:#c1c1c1;"></div>
<svg class="b" style="left:1384.5px;top:637.5px;" width="11" height="8" viewBox="0 0 11 8"><path d="M2.5 2.2 L5.4 5.4 L8.3 2.2 Z" fill="#505050"/></svg>
<div class="b" style="left:196.3px;top:702.8px;width:1211px;height:1px;background:#efefef;"></div>
<div class="t" style="left:210px;top:680.25px;font-size:8.51px;line-height:11px;color:#3597c7;font-weight:400;">Эффективность по дням</div>
<div class="t" style="left:325.5px;top:680.29px;font-size:8.41px;line-height:11px;color:#444;font-weight:400;">Эффективность по месяцам</div>
<div class="b" style="left:207px;top:702px;width:103.5px;height:1.8px;background:#3f4a85;"></div>
<div class="t" style="left:207.5px;top:716.82px;font-size:10.63px;line-height:14px;color:#222;font-weight:700;">Эффективность по дням</div>
<div class="b" style="left:1131.8px;top:739.3px;width:16.5px;height:9.3px;background:#e04056;border-radius:2px;"></div>
<div class="t" style="left:1152.5px;top:737.84px;font-size:9.4px;line-height:12px;color:#505050;font-weight:400;transform:scaleX(0.909);transform-origin:0 50%;">Задачи в работе</div>
<div class="b" style="left:1225.8px;top:743.2px;width:16.8px;height:1.3px;background:#3fcfd2;"></div>
<div class="t" style="left:1247px;top:737.84px;font-size:9.4px;line-height:12px;color:#505050;font-weight:400;transform:scaleX(0.865);transform-origin:0 50%;">Эффективность</div>
<div class="t" style="left:1315.1px;top:737.6px;width:17.300000000000182px;height:13.0px;box-sizing:border-box;border:1px solid #707070;border-radius:6.5px;font-size:7.7px;line-height:12.8px;text-align:center;color:#666;">All</div>
<div class="t" style="left:1337.5px;top:737.6px;width:18.299999999999955px;height:13.0px;box-sizing:border-box;border:1px solid #707070;border-radius:6.5px;font-size:7.7px;line-height:12.8px;text-align:center;color:#666;">Inv</div>
<svg class="b" style="left:1359px;top:738px;" width="34" height="14" viewBox="0 0 34 14"><g fill="none" stroke="#666" stroke-width="1">
<path d="M6 3.7 H12.2 V11.7 H3.9 V5.6"/><path d="M2 3.7 H5.8 M3.9 1.6 V5.4" stroke="#555"/>
<path d="M20.9 3.6 H28.8 V11.7 H20.6 V7.2"/><path d="M22.6 1.8 L20.8 3.6 L22.6 5.4" /></g></svg>
<svg class="b" style="left:0px;top:755px;" width="1440" height="17" viewBox="0 0 1440 17"><path d="M250 6.7 H1350" stroke="#e6ebf5" stroke-width="1"/><path d="M275 6.3 H293.7 L309 12.8" fill="none" stroke="#3fcfd2" stroke-width="1.2"/></svg>
<div class="t" style="right:1195.7px;top:754.07px;font-size:9.6px;line-height:12px;color:#7a7d85;font-weight:400;transform:scaleX(0.88);transform-origin:100% 50%;">600</div>
<div class="t" style="right:56.40000000000009px;top:754.07px;font-size:9.6px;line-height:12px;color:#7a7d85;font-weight:400;transform:scaleX(0.845);transform-origin:100% 50%;">100.0%</div>
</div></div>
</body></html>
